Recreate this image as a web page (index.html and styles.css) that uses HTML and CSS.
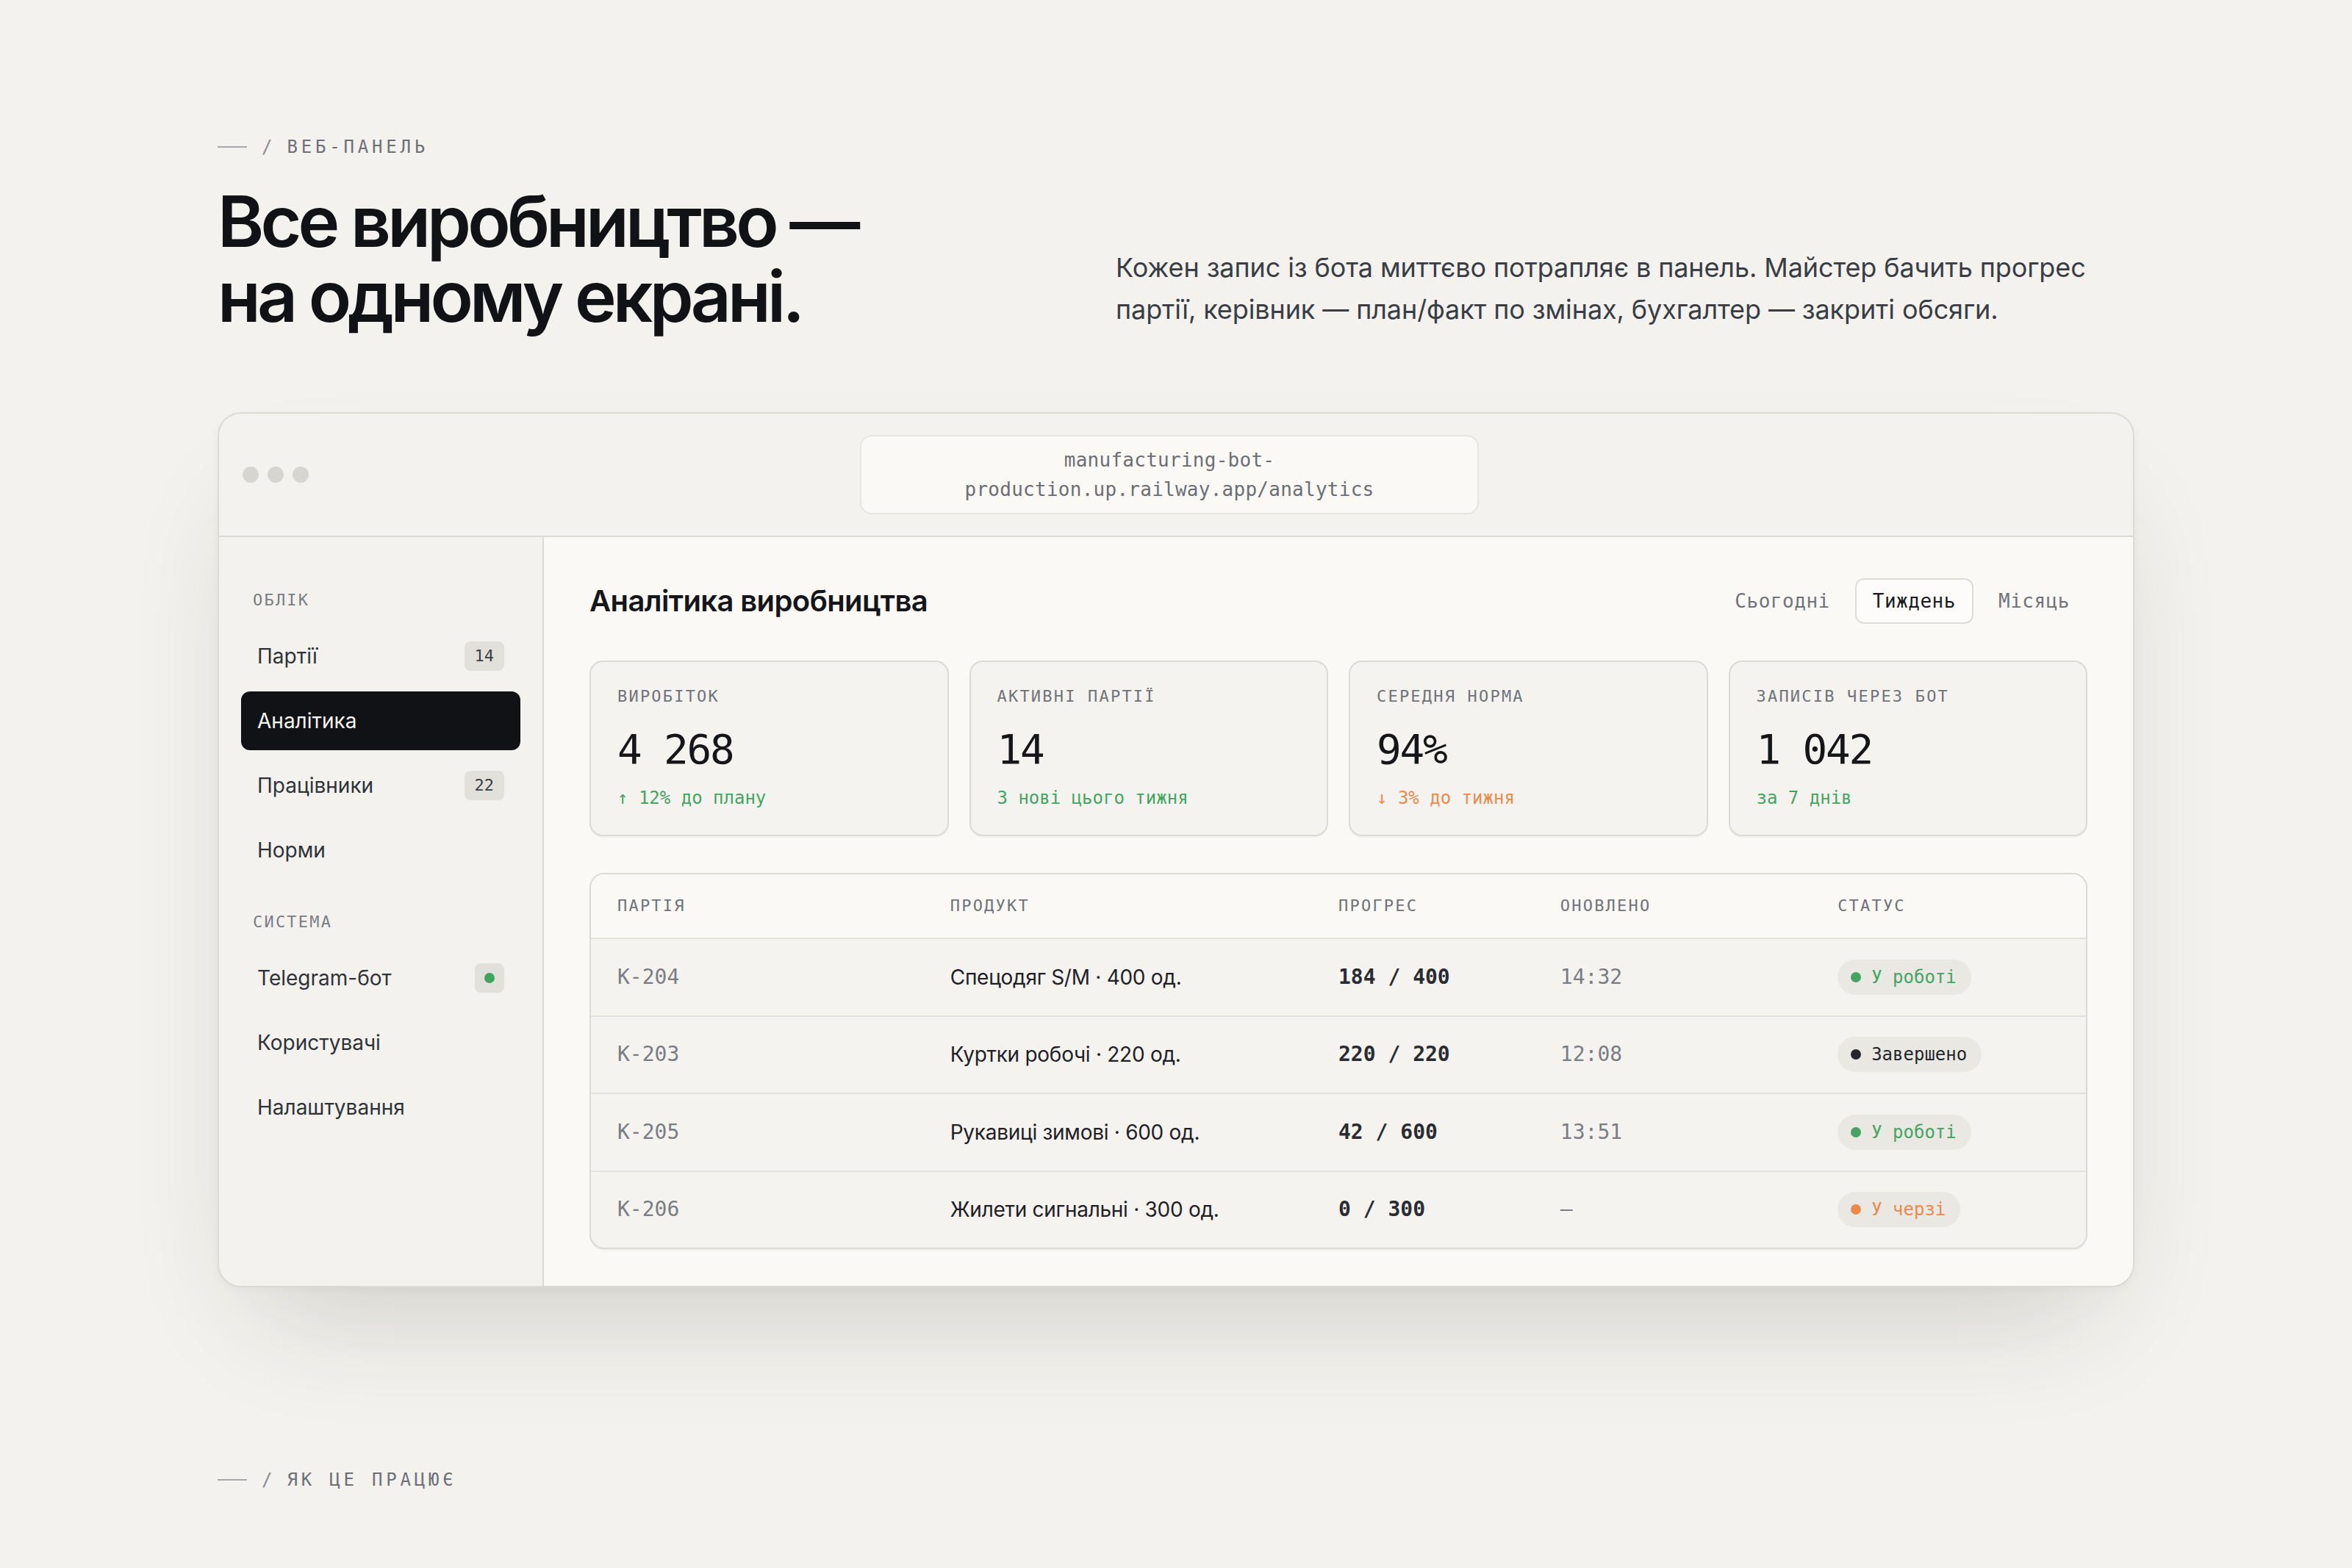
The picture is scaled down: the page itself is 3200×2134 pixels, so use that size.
FILE: index.html
```html
<!DOCTYPE html>
<html lang="uk">
<head>
<meta charset="utf-8">
<title>Веб-панель — аналітика виробництва</title>
<link rel="stylesheet" href="styles.css">
</head>
<body>
<main class="page">
  <div class="eyebrow"><span class="eyebrow-rule"></span><span class="eyebrow-slash">/</span><span>Веб-панель</span></div>

  <section class="intro">
    <h1 class="headline">Все виробництво —<br>на одному екрані.</h1>
    <p class="lead">Кожен запис із бота миттєво потрапляє в панель. Майстер бачить прогрес партії, керівник — план/факт по змінах, бухгалтер — закриті обсяги.</p>
  </section>

  <div class="browser">
    <div class="browser-bar">
      <div class="dots"><span></span><span></span><span></span></div>
      <div class="url">manufacturing-bot-production.up.railway.app/analytics</div>
      <div></div>
    </div>

    <div class="app">
      <aside class="sidebar">
        <div class="nav-group">
          <div class="nav-label">Облік</div>
          <nav class="nav">
            <a class="nav-item">Партії <span class="count">14</span></a>
            <a class="nav-item active">Аналітика</a>
            <a class="nav-item">Працівники <span class="count">22</span></a>
            <a class="nav-item">Норми</a>
          </nav>
        </div>
        <div class="nav-group">
          <div class="nav-label">Система</div>
          <nav class="nav">
            <a class="nav-item">Telegram-бот <span class="online"><i></i></span></a>
            <a class="nav-item">Користувачі</a>
            <a class="nav-item">Налаштування</a>
          </nav>
        </div>
      </aside>

      <section class="main">
        <div class="main-head">
          <h2 class="main-title">Аналітика виробництва</h2>
          <div class="tabs">
            <span class="tab">Сьогодні</span>
            <span class="tab active">Тиждень</span>
            <span class="tab">Місяць</span>
          </div>
        </div>

        <div class="kpis">
          <div class="kpi">
            <div class="kpi-label">Виробіток</div>
            <div class="kpi-value">4 268</div>
            <div class="kpi-note up">↑ 12% до плану</div>
          </div>
          <div class="kpi">
            <div class="kpi-label">Активні партії</div>
            <div class="kpi-value">14</div>
            <div class="kpi-note up">3 нові цього тижня</div>
          </div>
          <div class="kpi">
            <div class="kpi-label">Середня норма</div>
            <div class="kpi-value">94%</div>
            <div class="kpi-note down">↓ 3% до тижня</div>
          </div>
          <div class="kpi">
            <div class="kpi-label">Записів через бот</div>
            <div class="kpi-value">1 042</div>
            <div class="kpi-note up">за 7 днів</div>
          </div>
        </div>

        <div class="table">
          <div class="tr thead">
            <span>Партія</span><span>Продукт</span><span>Прогрес</span><span>Оновлено</span><span>Статус</span>
          </div>
          <div class="tr">
            <span class="c-id">К-204</span>
            <span class="c-product">Спецодяг S/M · 400 од.</span>
            <span class="c-progress">184 / 400</span>
            <span class="c-time">14:32</span>
            <span><span class="status work"><i></i>У роботі</span></span>
          </div>
          <div class="tr">
            <span class="c-id">К-203</span>
            <span class="c-product">Куртки робочі · 220 од.</span>
            <span class="c-progress">220 / 220</span>
            <span class="c-time">12:08</span>
            <span><span class="status done"><i></i>Завершено</span></span>
          </div>
          <div class="tr">
            <span class="c-id">К-205</span>
            <span class="c-product">Рукавиці зимові · 600 од.</span>
            <span class="c-progress">42 / 600</span>
            <span class="c-time">13:51</span>
            <span><span class="status work"><i></i>У роботі</span></span>
          </div>
          <div class="tr">
            <span class="c-id">К-206</span>
            <span class="c-product">Жилети сигнальні · 300 од.</span>
            <span class="c-progress">0 / 300</span>
            <span class="c-time">—</span>
            <span><span class="status queue"><i></i>У черзі</span></span>
          </div>
        </div>
      </section>
    </div>
  </div>

  <div class="eyebrow next"><span class="eyebrow-rule"></span><span class="eyebrow-slash">/</span><span>Як це працює</span></div>
</main>
</body>
</html>
```

FILE: styles.css
```css
/* Layout is authored at 1600px wide and scaled 2x for the high-density canvas */
html {
  zoom: 2;
  background: #f3f2ee;
}

body {
  margin: 0;
  font-family: Inter, "Noto Sans", sans-serif;
  color: #15161a;
}

.page {
  width: 1304px;
  margin: 0 auto;
  padding: 92px 0 60px;
}

/* Section eyebrow: rule / LABEL */
.eyebrow {
  display: flex;
  align-items: center;
  gap: 10px;
  font: 12px/16px "DejaVu Sans Mono", monospace;
  letter-spacing: 0.2em;
  text-transform: uppercase;
  color: #6d7077;
}
.eyebrow-rule {
  width: 20px;
  height: 1px;
  background: #a7a8ab;
}
.eyebrow-slash {
  color: #8a8c91;
  letter-spacing: 0;
}
.eyebrow.next {
  margin-top: 123px;
}

/* Intro: headline + lead */
.intro {
  display: grid;
  grid-template-columns: 1fr 693px;
  align-items: end;
  margin-top: 17px;
}
.headline {
  margin: 0;
  font-size: 48px;
  line-height: 51px;
  font-weight: 600;
  letter-spacing: -0.05em;
  color: #111216;
}
.lead {
  margin: 0 0 2px;
  max-width: 672px;
  font-size: 18px;
  line-height: 28.5px;
  letter-spacing: -0.003em;
  color: #3a3d44;
}

/* Browser window frame */
.browser {
  margin-top: 53.5px;
  border: 1px solid #dcdad5;
  border-radius: 16px;
  background: #f3f2ee;
  overflow: hidden;
  box-shadow: 0 40px 80px -30px rgba(40, 38, 28, 0.2), 0 2px 6px rgba(40, 38, 28, 0.03);
}
.browser-bar {
  display: grid;
  grid-template-columns: 1fr auto 1fr;
  align-items: center;
  padding: 14.5px 25px 14.5px 16px;
  border-bottom: 1px solid #dcdad5;
}
.dots {
  display: flex;
  gap: 6px;
}
.dots span {
  width: 11px;
  height: 11px;
  border-radius: 50%;
  background: #d7d5d0;
}
.url {
  width: 421px;
  box-sizing: border-box;
  padding: 6px 16px;
  background: #faf9f6;
  border: 1px solid #e7e5e0;
  border-radius: 8px;
  font: 13px/20px "DejaVu Sans Mono", monospace;
  letter-spacing: 0.01em;
  color: #6b6e75;
  text-align: center;
}

/* App shell */
.app {
  display: grid;
  grid-template-columns: 221px 1fr;
}
.sidebar {
  box-sizing: border-box;
  padding: 35px 15px;
  border-right: 1px solid #dcdad5;
}
.nav-group + .nav-group {
  margin-top: 21px;
}
.nav-label {
  padding-left: 8px;
  margin-bottom: 10px;
  font: 11px/16px "DejaVu Sans Mono", monospace;
  letter-spacing: 0.1em;
  text-transform: uppercase;
  color: #7b7e85;
}
.nav {
  display: flex;
  flex-direction: column;
  gap: 4px;
}
.nav-item {
  display: flex;
  align-items: center;
  justify-content: space-between;
  height: 40px;
  padding: 0 11px;
  border-radius: 6px;
  font-size: 14px;
  color: #2f3238;
}
.nav-item.active {
  background: #111216;
  color: #f6f5f2;
}
.count {
  height: 20px;
  padding: 0 7px;
  border-radius: 4px;
  background: #e2e0db;
  font: 11px/20px "DejaVu Sans Mono", monospace;
  color: #3b3e45;
}
.online {
  display: flex;
  align-items: center;
  justify-content: center;
  width: 20px;
  height: 20px;
  border-radius: 4px;
  background: #e2e0db;
}
.online i {
  width: 7px;
  height: 7px;
  border-radius: 50%;
  background: #3ea65c;
}

/* Main panel */
.main {
  display: flex;
  flex-direction: column;
  gap: 25px;
  padding: 28px 31px 25px;
  background: #faf9f6;
}
.main-head {
  display: flex;
  align-items: center;
  justify-content: space-between;
}
.main-title {
  margin: 0;
  font-size: 20px;
  line-height: 28px;
  font-weight: 600;
  letter-spacing: -0.015em;
  color: #15161a;
}
.tabs {
  display: flex;
  gap: 5px;
}
.tab {
  padding: 0 11px;
  height: 29px;
  border: 1px solid transparent;
  border-radius: 6px;
  font: 13px/29px "DejaVu Sans Mono", monospace;
  letter-spacing: 0.02em;
  color: #70737a;
}
.tab.active {
  background: #fdfcfa;
  border-color: #dedcd6;
  color: #1a1b1f;
}

/* KPI cards */
.kpis {
  display: grid;
  grid-template-columns: repeat(4, 1fr);
  gap: 14px;
}
.kpi {
  padding: 15.5px 18px 17px;
  border: 1px solid #dcdad4;
  border-radius: 9px;
  background: #f4f3ef;
  box-shadow: 0 1px 0 rgba(0, 0, 0, 0.03);
}
.kpi-label {
  font: 11px/16px "DejaVu Sans Mono", monospace;
  letter-spacing: 0.1em;
  text-transform: uppercase;
  color: #70737a;
}
.kpi-value {
  margin-top: 11px;
  font: 28px/34px "DejaVu Sans Mono", monospace;
  letter-spacing: -0.04em;
  color: #15161a;
}
.kpi-note {
  margin-top: 8px;
  font: 12px/16px "DejaVu Sans Mono", monospace;
}
.up {
  color: #45a462;
}
.down {
  color: #ea8a4d;
}

/* Batches table */
.table {
  border: 1px solid #dcdad4;
  border-radius: 10px;
  overflow: hidden;
  background: #f4f3ef;
  box-shadow: 0 1px 0 rgba(0, 0, 0, 0.03);
}
.tr {
  display: grid;
  grid-template-columns: 1.5fr 1.75fr 1fr 1.25fr 1fr;
  align-items: center;
  height: 51.75px;
  padding: 0 18px;
  border-top: 1px solid #e4e2dd;
}
.tr.thead {
  height: 43px;
  border-top: 0;
  border-bottom: 1px solid #e4e2dd;
  background: #faf9f6;
  font: 11px/16px "DejaVu Sans Mono", monospace;
  letter-spacing: 0.1em;
  text-transform: uppercase;
  color: #70737a;
}
.tr.thead + .tr {
  border-top: 0;
}
.c-id,
.c-time {
  font: 14px/20px "DejaVu Sans Mono", monospace;
  color: #7a7d84;
}
.c-product {
  font-size: 14px;
  letter-spacing: -0.01em;
  color: #1f2126;
}
.c-progress {
  font: 600 14px/20px "DejaVu Sans Mono", monospace;
  color: #2a2c31;
}
.status {
  display: inline-flex;
  align-items: center;
  gap: 7px;
  height: 24px;
  padding: 0 10px 0 9px;
  border-radius: 999px;
  background: #e9e8e3;
  font: 12px/24px "DejaVu Sans Mono", monospace;
}
.status i {
  width: 7px;
  height: 7px;
  border-radius: 50%;
  background: currentColor;
}
.status.work {
  color: #45a462;
}
.status.done {
  color: #24262b;
}
.status.queue {
  color: #ea8a4d;
}
```
